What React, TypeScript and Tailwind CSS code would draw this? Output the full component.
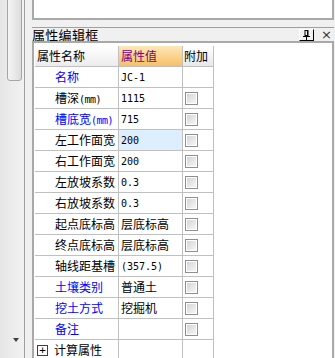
import React from "react";

const cjk = '"Noto Sans CJK SC", "Noto Sans", sans-serif';
const mono = '"DejaVu Sans Mono", "Liberation Mono", "Noto Sans CJK SC", monospace';

type Row = {
  name: string;
  unit?: string;
  blue?: boolean;
  value?: string;
  cjkValue?: boolean;
  selected?: boolean;
  check?: boolean;
};

const rows: Row[] = [
  { name: "名称", blue: true, value: "JC-1" },
  { name: "槽深", unit: "(mm)", value: "1115", check: true },
  { name: "槽底宽", unit: "(mm)", blue: true, value: "715", check: true },
  { name: "左工作面宽", value: "200", selected: true, check: true },
  { name: "右工作面宽", value: "200", check: true },
  { name: "左放坡系数", value: "0.3", check: true },
  { name: "右放坡系数", value: "0.3", check: true },
  { name: "起点底标高", value: "层底标高", cjkValue: true, check: true },
  { name: "终点底标高", value: "层底标高", cjkValue: true, check: true },
  { name: "轴线距基槽", value: "(357.5)", check: true },
  { name: "土壤类别", blue: true, value: "普通土", cjkValue: true, check: true },
  { name: "挖土方式", blue: true, value: "挖掘机", cjkValue: true, check: true },
  { name: "备注", blue: true, check: true },
];

const Checkbox = () => (
  <div className="w-[13px] h-[13px] border border-[#8e8f8f] bg-white p-[1px]">
    <div className="w-full h-full bg-gradient-to-br from-[#d2d5da] to-[#f6f6f6]" />
  </div>
);

const PinIcon = () => (
  <svg width="9" height="10" viewBox="0 0 9 10">
    <rect x="3" y="0.5" width="3" height="5" fill="none" stroke="#000" strokeWidth="1" />
    <rect x="5" y="1" width="1" height="4.5" fill="#000" />
    <line x1="1" y1="6.5" x2="8" y2="6.5" stroke="#000" strokeWidth="1" />
    <line x1="4.5" y1="7" x2="4.5" y2="10" stroke="#000" strokeWidth="1" />
  </svg>
);

export default function App() {
  return (
    <div
      className="w-[335px] h-[358px] flex bg-[#f0f0f0] overflow-hidden text-[12px] text-black"
      style={{ fontFamily: cjk }}
    >
      {/* left scrollbar */}
      <div className="w-[25px] h-full relative border-r border-[#a0a0a0] bg-gradient-to-r from-[#e6e6e6] to-[#f2f2f2]">
        <div className="absolute left-[7px] top-[-3px] w-[15px] h-[84px] rounded-b-[3px] border border-[#a5a5a5] bg-gradient-to-r from-[#f4f4f4] via-[#e9e9e9] to-[#dcdcdc]" />
        <div className="absolute left-[13px] top-[338px] w-0 h-0 border-l-[3px] border-r-[3px] border-t-[4px] border-l-transparent border-r-transparent border-t-[#404040]" />
      </div>

      <div className="flex-1 flex flex-col pl-[7px] pr-[1px]">
        <div className="h-[20px] shrink-0 bg-white border-x-2 border-b-2 border-[#a9a9a9]" />
        <div className="h-[7px] shrink-0" />
        <div className="h-[14px] shrink-0 border-t border-[#a0a0a0] flex items-center justify-between">
          <span className="text-[13px] leading-[13px] tracking-[0.3px]">属性编辑框</span>
          <div className="flex items-center gap-[7px] pr-[2px]">
            <div className="w-[15px] h-[12px] border border-white border-b-[#000] border-r-[#000] flex items-center justify-center">
              <PinIcon />
            </div>
            <span className="text-[13px] leading-[13px] text-[#333]" style={{ fontFamily: '"DejaVu Sans", sans-serif' }}>
              ×
            </span>
          </div>
        </div>

        <div className="flex-1 bg-white border-x-2 border-t-2 border-[#a9a9a9] pt-[3px] pl-px">
          <div className="grid grid-cols-[84px_64px_31px]">
            {/* header */}
            <div className="h-[21px] border-r border-b border-[#c0c0c0] bg-gradient-to-b from-white to-[#ececec] pl-[2px] flex items-center">
              属性名称
            </div>
            <div className="h-[21px] border-r border-b border-[#c0c0c0] bg-gradient-to-b from-[#fde8b8] to-[#f6c063] pl-[2px] flex items-center text-[#800080]">
              属性值
            </div>
            <div className="h-[21px] border-r border-b border-[#c0c0c0] bg-gradient-to-b from-white to-[#e8e8e8] pl-[1px] flex items-center">
              附加
            </div>

            {rows.map((r) => (
              <React.Fragment key={r.name}>
                <div
                  className={`h-[21px] border-r border-b border-[#c0c0c0] pl-[20px] flex items-center whitespace-nowrap ${
                    r.blue ? "text-[#0000ff]" : "text-black"
                  }`}
                >
                  <span>
                    {r.name}
                    {r.unit && (
                      <span className="text-[10px] tracking-[-0.5px]" style={{ fontFamily: mono }}>
                        {r.unit}
                      </span>
                    )}
                  </span>
                </div>
                <div
                  className={`h-[21px] border-r border-b border-[#c0c0c0] pl-[2px] flex items-center whitespace-nowrap ${
                    r.selected ? "bg-[#ddeeff]" : ""
                  }`}
                >
                  {r.value && (
                    <span
                      className={r.cjkValue ? "text-[12px]" : "text-[10px]"}
                      style={{ fontFamily: r.cjkValue ? cjk : mono }}
                    >
                      {r.value}
                    </span>
                  )}
                </div>
                <div className="h-[21px] border-r border-b border-[#c0c0c0] pl-[2px] flex items-center">
                  {r.check && <Checkbox />}
                </div>
              </React.Fragment>
            ))}

            <div className="h-[21px] border-r border-b border-[#c0c0c0] pl-[2px] flex items-center">
              <div className="w-[11px] h-[11px] border border-[#404040] flex items-center justify-center text-[11px] leading-none mr-[6px]" style={{ fontFamily: mono }}>
                +
              </div>
              计算属性
            </div>
            <div className="h-[21px] border-r border-b border-[#c0c0c0]" />
            <div className="h-[21px] border-r border-b border-[#c0c0c0]" />
          </div>
        </div>
      </div>
    </div>
  );
}
